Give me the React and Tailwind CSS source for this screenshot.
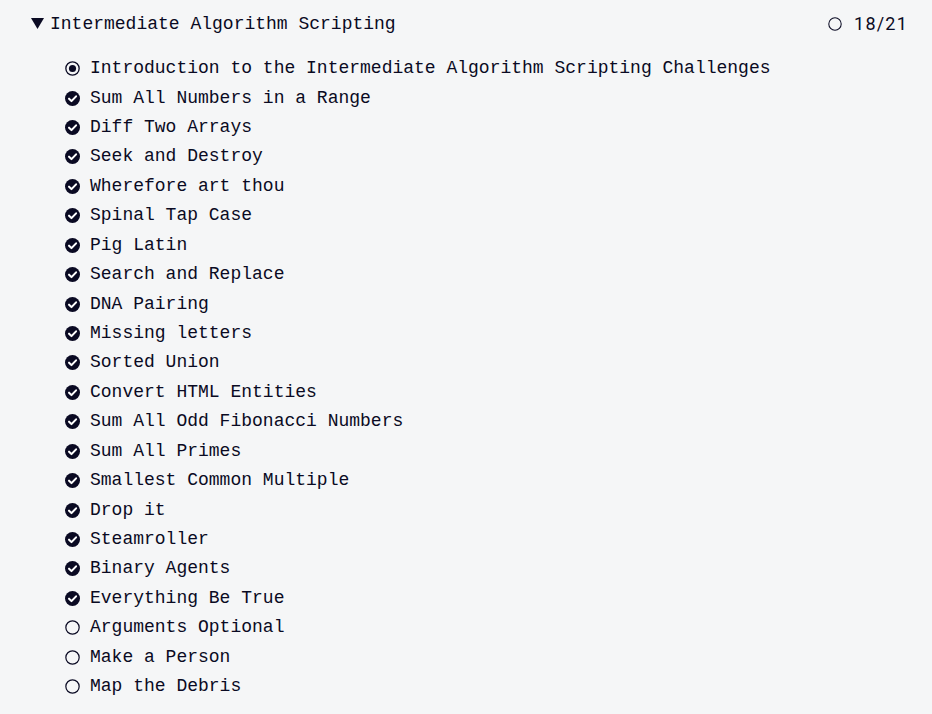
import React from "react";

const items = [
  ["Introduction to the Intermediate Algorithm Scripting Challenges", "current"],
  ["Sum All Numbers in a Range", "done"],
  ["Diff Two Arrays", "done"],
  ["Seek and Destroy", "done"],
  ["Wherefore art thou", "done"],
  ["Spinal Tap Case", "done"],
  ["Pig Latin", "done"],
  ["Search and Replace", "done"],
  ["DNA Pairing", "done"],
  ["Missing letters", "done"],
  ["Sorted Union", "done"],
  ["Convert HTML Entities", "done"],
  ["Sum All Odd Fibonacci Numbers", "done"],
  ["Sum All Primes", "done"],
  ["Smallest Common Multiple", "done"],
  ["Drop it", "done"],
  ["Steamroller", "done"],
  ["Binary Agents", "done"],
  ["Everything Be True", "done"],
  ["Arguments Optional", "todo"],
  ["Make a Person", "todo"],
  ["Map the Debris", "todo"],
];

function Icon({ type }) {
  if (type === "done") {
    return (
      <svg width="15" height="15" viewBox="0 0 16 16" className="shrink-0">
        <circle cx="8" cy="8" r="8" fill="#0a0a23" />
        <path d="M4.3 8.2 L6.9 10.8 L11.8 5.7" fill="none" stroke="#ffffff" strokeWidth="2.2" strokeLinecap="round" strokeLinejoin="round" />
      </svg>
    );
  }
  if (type === "current") {
    return (
      <svg width="15" height="15" viewBox="0 0 16 16" className="shrink-0">
        <circle cx="8" cy="8" r="7.1" fill="none" stroke="#0a0a23" strokeWidth="1.4" />
        <circle cx="8" cy="8" r="3.8" fill="#0a0a23" />
      </svg>
    );
  }
  return (
    <svg width="15" height="15" viewBox="0 0 16 16" className="shrink-0">
      <circle cx="8" cy="8" r="7.1" fill="none" stroke="#0a0a23" strokeWidth="1.3" />
    </svg>
  );
}

export default function App() {
  return (
    <div className="min-h-[714px] w-[932px] bg-[#f5f6f7] text-[#0a0a23] overflow-hidden">
      <div className="flex h-[47px] items-center justify-between pl-[31px] pr-[24px]">
        <div className="flex items-center gap-[6px]">
          <svg width="13" height="11" viewBox="0 0 13 11" className="shrink-0 mt-[-1px]">
            <path d="M0 0 H13 L6.5 11 Z" fill="#0a0a23" />
          </svg>
          <span className="font-['Liberation_Mono',monospace] text-[18px] leading-[27px] mt-[1px]">
            Intermediate Algorithm Scripting
          </span>
        </div>
        <div className="flex items-center gap-[12px]">
          <svg width="14" height="14" viewBox="0 0 16 16" className="shrink-0">
            <circle cx="8" cy="8" r="7.1" fill="none" stroke="#0a0a23" strokeWidth="1.2" />
          </svg>
          <span className="font-['Roboto',sans-serif] text-[18px] leading-[27px] tracking-[1.2px]">18/21</span>
        </div>
      </div>
      <ul className="mt-[7px] pl-[65px]">
        {items.map(([title, type]) => (
          <li key={title} className="flex h-[29.43px] items-center gap-[10px]">
            <Icon type={type} />
            <span className="font-['Liberation_Mono',monospace] text-[18px] leading-[27px] whitespace-nowrap">
              {title}
            </span>
          </li>
        ))}
      </ul>
    </div>
  );
}
